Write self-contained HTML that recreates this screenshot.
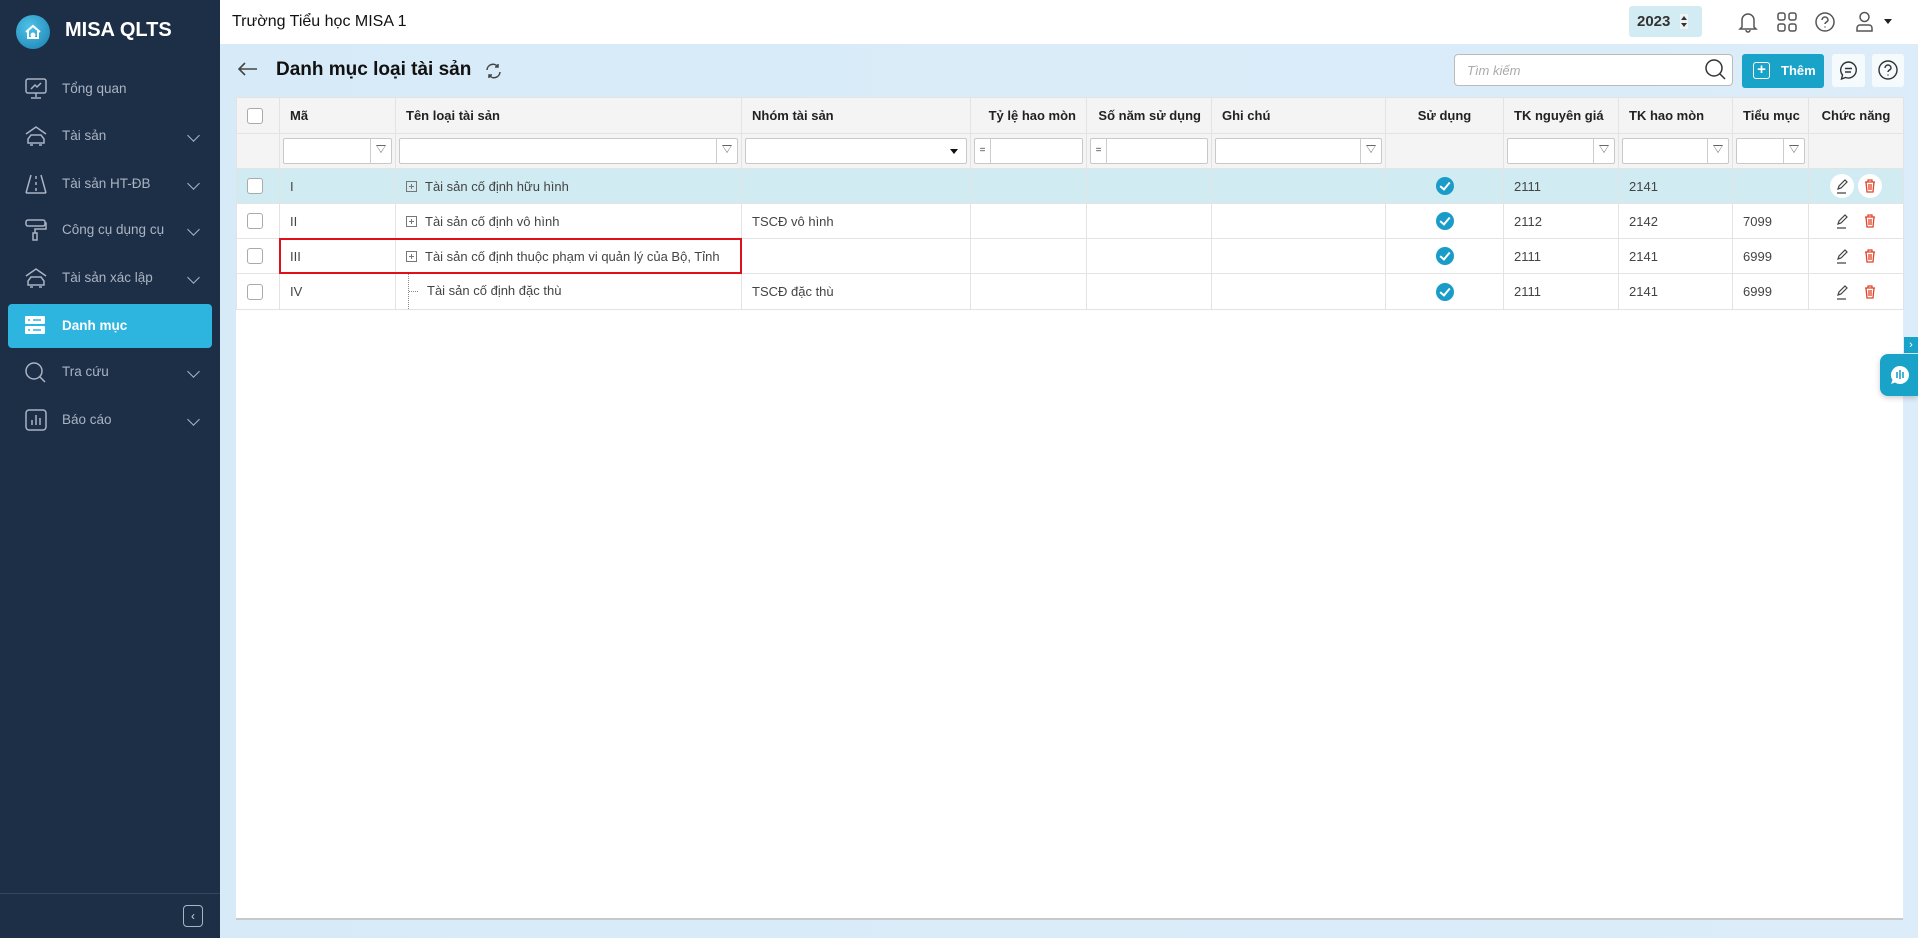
<!DOCTYPE html>
<html><head><meta charset="utf-8"><style>
*{box-sizing:border-box;margin:0;padding:0}
body{width:1918px;height:938px;overflow:hidden;font-family:"Liberation Sans",sans-serif;font-size:13px;color:#333;background:linear-gradient(90deg,#d6eaf8,#dcedf9);position:relative}
.sb{position:absolute;left:0;top:0;width:220px;height:938px;background:#1d2e47}
.logo{position:absolute;left:16px;top:15px;width:34px;height:34px;border-radius:50%;background:radial-gradient(circle at 40% 35%,#4fc3e8,#1a7fb0)}
.brand{position:absolute;left:65px;top:19px;color:#fff;font-weight:bold;font-size:20px}
.it{position:absolute;left:8px;width:204px;height:44px;color:#aab4c2;font-size:13.5px;line-height:44px;padding-left:54px}
.it svg.ic{position:absolute;left:16px;top:11px}
.it .ch{position:absolute;right:14px;top:17px;width:9px;height:9px;border-right:1.6px solid #aab4c2;border-bottom:1.6px solid #aab4c2;transform:rotate(45deg)}
.it.act{background:#2db5df;color:#fff;font-weight:bold;border-radius:4px}
.top{position:absolute;left:220px;top:0;right:0;height:44px;background:#fff}
.main{position:absolute;left:236px;top:97px;width:1667px;height:823px;background:#fff;border-bottom:2px solid #c8c8c8}
table{border-collapse:collapse;table-layout:fixed;width:1667px}
td,th{border:1px solid #e3e3e3;height:35px;padding:0 10px;white-space:nowrap;overflow:hidden;text-align:left;color:#444}
th{background:#f4f4f4;font-weight:bold;color:#222;height:36px}
tr.f td{background:#f4f4f4;padding:0 3px}
tr.sel td{background:#d0ebf2}
.cb{display:inline-block;width:16px;height:16px;border:1px solid #aaa;border-radius:3px;background:#fff;vertical-align:middle}
.in{height:26px;border:1px solid #c9c9c9;background:#fff;border-radius:2px;position:relative}
.in .fl{position:absolute;right:0;top:0;width:21px;height:24px;border-left:1px solid #ccc}
.in .fl:after{content:"";position:absolute;left:5px;top:6px;border-left:5px solid transparent;border-right:5px solid transparent;border-top:8px solid #666}
.in .fl:before{content:"";position:absolute;left:6px;top:7px;border-left:4px solid transparent;border-right:4px solid transparent;border-top:6px solid #fff;z-index:1}
.in .eq{position:absolute;left:0;top:0;width:16px;height:24px;border-right:1px solid #ccc;font-size:10px;text-align:center;line-height:24px}
.pl{display:inline-block;width:11px;height:11px;border:1px solid #777;vertical-align:-1px;margin-right:8px;position:relative}
.pl:before{content:"";position:absolute;left:2px;top:4px;width:5px;height:1px;background:#777}
.pl:after{content:"";position:absolute;left:4px;top:2px;width:1px;height:5px;background:#777}
.ok{display:inline-block;width:18px;height:18px;border-radius:50%;background:#1a9cc8;position:relative;vertical-align:middle}
.ok:after{content:"";position:absolute;left:6px;top:3px;width:4px;height:8px;border-right:2px solid #fff;border-bottom:2px solid #fff;transform:rotate(40deg)}
.c{text-align:center}
.ab{display:inline-block;width:24px;height:24px;border-radius:50%;vertical-align:middle;position:relative}
.ab svg{position:absolute;left:4px;top:4px}
</style></head><body>
<div class="sb">
<div class="logo"><svg width="34" height="34" viewBox="0 0 34 34"><path d="M10 17 L17 11 L24 17 M12 16 V23 H22 V16" stroke="#fff" stroke-width="2" fill="none"/><circle cx="17" cy="20" r="2.5" fill="#fff"/></svg></div>
<div class="brand">MISA QLTS</div>
<div class="it" style="top:67px"><svg class="ic" width="24" height="22" viewBox="0 0 24 22" fill="none" stroke="#aab4c2" stroke-width="1.5"><rect x="2" y="1" width="20" height="14" rx="2"/><path d="M7 11l4-4 2 2 4-4M12 15v4M7 20h10"/></svg>Tổng quan</div>
<div class="it" style="top:114px"><svg class="ic" width="24" height="22" viewBox="0 0 24 22" fill="none" stroke="#aab4c2" stroke-width="1.5"><path d="M2 9L12 2l10 7M4 18v-4l3-4h10l3 4v4zM6 20h3M15 20h3"/></svg>Tài sản<span class="ch"></span></div>
<div class="it" style="top:162px"><svg class="ic" width="24" height="22" viewBox="0 0 24 22" fill="none" stroke="#aab4c2" stroke-width="1.5"><path d="M7 2L2 20M17 2l5 18M2 20h20M12 3v3M12 9v3M12 15v3"/></svg>Tài sản HT-ĐB<span class="ch"></span></div>
<div class="it" style="top:208px"><svg class="ic" width="24" height="22" viewBox="0 0 24 22" fill="none" stroke="#aab4c2" stroke-width="1.5"><rect x="2" y="1" width="19" height="6" rx="2"/><path d="M21 4h1v6H11v4"/><rect x="9" y="14" width="4" height="7"/></svg>Công cụ dụng cụ<span class="ch"></span></div>
<div class="it" style="top:256px"><svg class="ic" width="24" height="22" viewBox="0 0 24 22" fill="none" stroke="#aab4c2" stroke-width="1.5"><path d="M2 9L12 2l10 7M4 18v-4l3-4h10l3 4v4zM6 20h3M15 20h3"/></svg>Tài sản xác lập<span class="ch"></span></div>
<div class="it act" style="top:304px"><svg class="ic" width="22" height="20" viewBox="0 0 22 20"><rect x="1" y="1" width="20" height="8" rx="1" fill="#fff"/><rect x="1" y="11" width="20" height="8" rx="1" fill="#fff"/><path d="M4 5h2M9 5h8M4 15h2M9 15h8" stroke="#2db5df" stroke-width="1.5"/></svg>Danh mục</div>
<div class="it" style="top:350px"><svg class="ic" width="24" height="22" viewBox="0 0 24 22" fill="none" stroke="#aab4c2" stroke-width="1.5"><circle cx="10" cy="10" r="8"/><path d="M16 16l5 5"/></svg>Tra cứu<span class="ch"></span></div>
<div class="it" style="top:398px"><svg class="ic" width="24" height="22" viewBox="0 0 24 22" fill="none" stroke="#aab4c2" stroke-width="1.5"><rect x="2" y="1" width="20" height="20" rx="3"/><path d="M8 16v-5M12 16V6M16 16v-7"/></svg>Báo cáo<span class="ch"></span></div>
<div style="position:absolute;left:0;top:893px;width:220px;height:1px;background:#34465e"></div>
<div style="position:absolute;left:183px;top:905px;width:20px;height:22px;border:1px solid #aab4c2;border-radius:4px;color:#cfd6de;font-size:12px;text-align:center;line-height:20px">‹</div>
</div>
<div class="top">
<div style="position:absolute;left:12px;top:13px;font-size:16px;color:#111">Trường Tiểu học MISA 1</div>
<div style="position:absolute;left:1409px;top:6px;width:73px;height:31px;background:#d3ebf3;border-radius:3px;font-weight:bold;font-size:15px;line-height:31px;padding-left:8px;color:#333">2023<span style="position:absolute;left:51px;top:8px;width:8px;height:15px;background:#eef4f6"></span><span style="position:absolute;left:52px;top:10px;border-left:3px solid transparent;border-right:3px solid transparent;border-bottom:4px solid #333"></span><span style="position:absolute;left:52px;top:17px;border-left:3px solid transparent;border-right:3px solid transparent;border-top:4px solid #333"></span></div>
<svg style="position:absolute;left:1518px;top:11px" width="20" height="22" viewBox="0 0 20 22" fill="none" stroke="#555" stroke-width="1.5"><path d="M4 16V9a6 6 0 0112 0v7l2 2H2zM8 19a2 2 0 004 0"/></svg>
<svg style="position:absolute;left:1557px;top:12px" width="20" height="20" viewBox="0 0 20 20" fill="none" stroke="#555" stroke-width="1.5"><rect x="1" y="1" width="7" height="7" rx="2"/><rect x="12" y="1" width="7" height="7" rx="2"/><rect x="1" y="12" width="7" height="7" rx="2"/><rect x="12" y="12" width="7" height="7" rx="2"/></svg>
<svg style="position:absolute;left:1595px;top:12px" width="20" height="20" viewBox="0 0 20 20" fill="none" stroke="#555" stroke-width="1.5"><circle cx="10" cy="10" r="9"/><path d="M7 8a3 3 0 116 0c0 2-3 2-3 4M10 14.5v1"/></svg>
<svg style="position:absolute;left:1635px;top:11px" width="19" height="22" viewBox="0 0 19 22" fill="none" stroke="#555" stroke-width="1.5"><circle cx="9.5" cy="6" r="4.5"/><path d="M2 20v-3a3 3 0 013-3h9a3 3 0 013 3v3z"/></svg>
<div style="position:absolute;left:1664px;top:19px;border-left:4px solid transparent;border-right:4px solid transparent;border-top:5px solid #222"></div>
</div>
<svg style="position:absolute;left:238px;top:62px" width="20" height="14" viewBox="0 0 20 14" fill="none" stroke="#444" stroke-width="1.6"><path d="M19 7H2M7 1L1 7l6 6"/></svg>
<div style="position:absolute;left:276px;top:59px;font-size:19px;font-weight:bold;color:#111">Danh mục loại tài sản</div>
<svg style="position:absolute;left:485px;top:63px" width="17" height="16" viewBox="0 0 17 16" fill="none" stroke="#444" stroke-width="1.5"><path d="M2 7a6 6 0 0111-3M15 9a6 6 0 01-11 3M13 1v3h-3M4 15v-3h3"/></svg>
<div style="position:absolute;left:1454px;top:54px;width:279px;height:32px;background:#fff;border:1px solid #bbb;border-radius:4px;font-style:italic;color:#aaa;padding:8px 12px">Tìm kiếm</div>
<svg style="position:absolute;left:1705px;top:59px" width="22" height="22" viewBox="0 0 22 22" fill="none" stroke="#333" stroke-width="1.5"><circle cx="9" cy="9" r="8"/><path d="M15 15l5 5"/></svg>
<div style="position:absolute;left:1742px;top:54px;width:82px;height:34px;background:#1aa3c9;border-radius:3px;color:#fff;font-weight:bold;font-size:13px;line-height:34px;padding-left:39px">Thêm<span style="position:absolute;left:11px;top:8px;width:17px;height:17px;border:1.5px solid #fff;border-radius:3px;line-height:13px;text-align:center;font-size:15px;padding:0">+</span></div>
<div style="position:absolute;left:1832px;top:54px;width:33px;height:33px;background:#f5fafd;border-radius:3px"><svg style="margin:6px" width="21" height="21" viewBox="0 0 21 21" fill="none" stroke="#333" stroke-width="1.4"><path d="M10.5 2a8 8 0 00-6 13l-1 4 4-1.5A8 8 0 1010.5 2zM7 8.5h7M7 12h6"/></svg></div>
<div style="position:absolute;left:1872px;top:54px;width:32px;height:33px;background:#f5fafd;border-radius:3px"><svg style="margin:6px" width="20" height="20" viewBox="0 0 20 20" fill="none" stroke="#333" stroke-width="1.4"><circle cx="10" cy="10" r="9"/><path d="M7 8a3 3 0 116 0c0 2-3 2-3 4M10 14.5v1"/></svg></div>

<div class="main"><table>
<colgroup><col style="width:43px"><col style="width:116px"><col style="width:346px"><col style="width:229px"><col style="width:116px"><col style="width:125px"><col style="width:174px"><col style="width:118px"><col style="width:115px"><col style="width:114px"><col style="width:76px"><col style="width:95px"></colgroup>
<tr><th><span class="cb"></span></th><th>Mã</th><th>Tên loại tài sản</th><th>Nhóm tài sản</th><th style="text-align:right">Tỷ lệ hao mòn</th><th style="text-align:right">Số năm sử dụng</th><th>Ghi chú</th><th class="c">Sử dụng</th><th>TK nguyên giá</th><th>TK hao mòn</th><th>Tiểu mục</th><th class="c">Chức năng</th></tr>
<tr class="f"><td></td><td><div class="in"><span class="fl"></span></div></td><td><div class="in"><span class="fl"></span></div></td><td><div class="in"><span style="position:absolute;right:8px;top:10px;border-left:4px solid transparent;border-right:4px solid transparent;border-top:5px solid #111"></span></div></td><td><div class="in"><span class="eq">=</span></div></td><td><div class="in"><span class="eq">=</span></div></td><td><div class="in"><span class="fl"></span></div></td><td></td><td><div class="in"><span class="fl"></span></div></td><td><div class="in"><span class="fl"></span></div></td><td><div class="in"><span class="fl"></span></div></td><td></td></tr>
<tr class="sel"><td><span class="cb"></span></td><td>I</td><td><span class="pl"></span>Tài sản cố định hữu hình</td><td></td><td></td><td></td><td></td><td class="c"><span class="ok"></span></td><td>2111</td><td>2141</td><td></td><td class="c"><span class="ab" style="background:#fff;margin-right:4px"><svg width="16" height="16" viewBox="0 0 16 16" fill="none" stroke="#444" stroke-width="1.2"><path d="M4 11l1-3 6-6 2 2-6 6zM3 15h9"/></svg></span><span class="ab" style="background:#fff"><svg width="16" height="16" viewBox="0 0 16 16" fill="none" stroke="#e0452a" stroke-width="1.3"><path d="M3 4h10M6 4V2h4v2M4 4l1 10h6l1-10M7 6v6M9 6v6"/></svg></span></td></tr>
<tr><td><span class="cb"></span></td><td>II</td><td><span class="pl"></span>Tài sản cố định vô hình</td><td>TSCĐ vô hình</td><td></td><td></td><td></td><td class="c"><span class="ok"></span></td><td>2112</td><td>2142</td><td>7099</td><td class="c"><span class="ab" style="margin-right:4px"><svg width="16" height="16" viewBox="0 0 16 16" fill="none" stroke="#444" stroke-width="1.2"><path d="M4 11l1-3 6-6 2 2-6 6zM3 15h9"/></svg></span><span class="ab"><svg width="16" height="16" viewBox="0 0 16 16" fill="none" stroke="#e0452a" stroke-width="1.3"><path d="M3 4h10M6 4V2h4v2M4 4l1 10h6l1-10M7 6v6M9 6v6"/></svg></span></td></tr>
<tr><td><span class="cb"></span></td><td>III</td><td><span class="pl"></span>Tài sản cố định thuộc phạm vi quản lý của Bộ, Tỉnh</td><td></td><td></td><td></td><td></td><td class="c"><span class="ok"></span></td><td>2111</td><td>2141</td><td>6999</td><td class="c"><span class="ab" style="margin-right:4px"><svg width="16" height="16" viewBox="0 0 16 16" fill="none" stroke="#444" stroke-width="1.2"><path d="M4 11l1-3 6-6 2 2-6 6zM3 15h9"/></svg></span><span class="ab"><svg width="16" height="16" viewBox="0 0 16 16" fill="none" stroke="#e0452a" stroke-width="1.3"><path d="M3 4h10M6 4V2h4v2M4 4l1 10h6l1-10M7 6v6M9 6v6"/></svg></span></td></tr>
<tr><td><span class="cb"></span></td><td>IV</td><td><span style="display:inline-block;width:19px;border-left:1px dotted #888;height:35px;vertical-align:middle;position:relative;margin-left:2px"><span style="position:absolute;left:0;top:17px;width:9px;border-top:1px dotted #888"></span></span>Tài sản cố định đặc thù</td><td>TSCĐ đặc thù</td><td></td><td></td><td></td><td class="c"><span class="ok"></span></td><td>2111</td><td>2141</td><td>6999</td><td class="c"><span class="ab" style="margin-right:4px"><svg width="16" height="16" viewBox="0 0 16 16" fill="none" stroke="#444" stroke-width="1.2"><path d="M4 11l1-3 6-6 2 2-6 6zM3 15h9"/></svg></span><span class="ab"><svg width="16" height="16" viewBox="0 0 16 16" fill="none" stroke="#e0452a" stroke-width="1.3"><path d="M3 4h10M6 4V2h4v2M4 4l1 10h6l1-10M7 6v6M9 6v6"/></svg></span></td></tr>
</table>
<div style="position:absolute;left:43px;top:141px;width:463px;height:36px;border:2px solid #e0101a"></div>
</div>
<div style="position:absolute;left:1904px;top:337px;width:14px;height:16px;background:#1aa3c9;color:#fff;font-size:11px;text-align:center;line-height:16px">›</div>
<div style="position:absolute;left:1880px;top:354px;width:38px;height:42px;background:#1aa3c9;border-radius:8px 0 0 8px;box-shadow:0 2px 6px rgba(0,0,0,.2)"><svg style="margin:11px 0 0 10px" width="20" height="20" viewBox="0 0 20 20"><path d="M10 1a9 9 0 11-5 16.5L1 19l1.5-4A9 9 0 0110 1z" fill="#fff"/><path d="M7 7v6M10 5v9M13 7v6" stroke="#1aa3c9" stroke-width="1.6"/></svg></div>
</body></html>
